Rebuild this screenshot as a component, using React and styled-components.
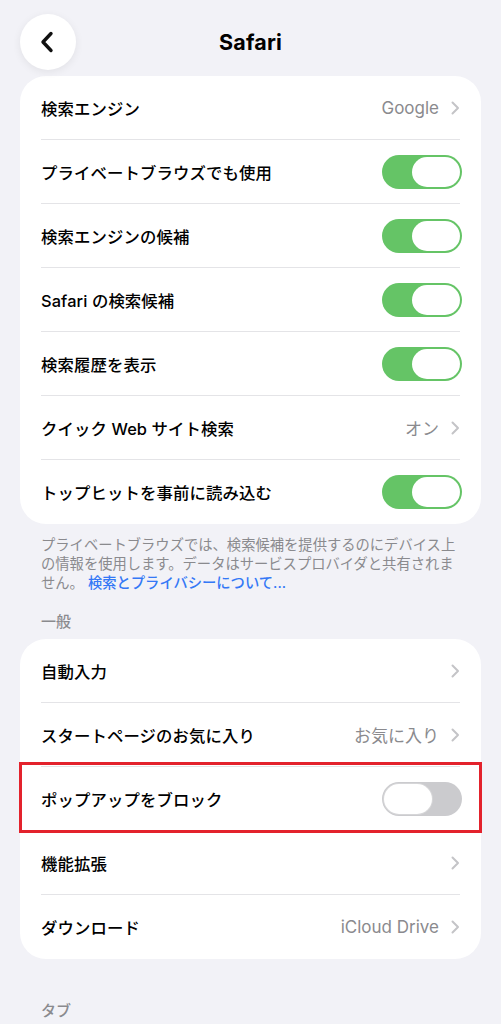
import styled, { createGlobalStyle } from 'styled-components';

const GlobalStyle = createGlobalStyle`
    body {
        margin: 0;
        background: #f2f2f7;
        font-family: Inter, "Noto Sans CJK JP", sans-serif;
        color: #000;
    }
`;

const searchRows = [
    { label: '検索エンジン', value: 'Google' },
    { label: 'プライベートブラウズでも使用', toggle: true },
    { label: '検索エンジンの候補', toggle: true },
    { label: 'Safari の検索候補', toggle: true },
    { label: '検索履歴を表示', toggle: true },
    { label: 'クイック Web サイト検索', value: 'オン' },
    { label: 'トップヒットを事前に読み込む', toggle: true },
];

const generalRows = [
    { label: '自動入力', value: '' },
    { label: 'スタートページのお気に入り', value: 'お気に入り' },
    { label: 'ポップアップをブロック', toggle: false, marked: true },
    { label: '機能拡張', value: '' },
    { label: 'ダウンロード', value: 'iCloud Drive' },
];

const Chevron = () => (
    <svg width="9" height="14" viewBox="0 0 9 14">
        <path d="M1.5 1.5 L7 7 L1.5 12.5" fill="none" stroke="#c4c4c7" strokeWidth="2" strokeLinecap="round" strokeLinejoin="round" />
    </svg>
);

const SettingRow = ({ row }) => (
    <Row>
        <Label>{row.label}</Label>
        {row.toggle !== undefined ? (
            <Switch $on={row.toggle}><Knob $on={row.toggle} /></Switch>
        ) : (
            <Accessory>
                {row.value && <Value>{row.value}</Value>}
                <Chevron />
            </Accessory>
        )}
        {row.marked && <Highlight />}
    </Row>
);

const App = () => {
    return(
        <>
            <GlobalStyle />
            <Page>
                <Header>
                    <BackButton>
                        <svg width="14" height="22" viewBox="0 0 14 22">
                            <path d="M11 2.5 L3 11 L11 19.5" fill="none" stroke="#111" strokeWidth="3.4" strokeLinecap="round" strokeLinejoin="round" />
                        </svg>
                    </BackButton>
                    <Title>Safari</Title>
                    <span />
                </Header>

                <Card>
                    {searchRows.map((row) => <SettingRow key={row.label} row={row} />)}
                </Card>
                <Footer>
                    プライベートブラウズでは、検索候補を提供するのにデバイス上の情報を使用します。データはサービスプロバイダと共有されません。 <a>検索とプライバシーについて...</a>
                </Footer>

                <SectionTitle>一般</SectionTitle>
                <Card>
                    {generalRows.map((row) => <SettingRow key={row.label} row={row} />)}
                </Card>

                <SectionTitle $spaced>タブ</SectionTitle>
            </Page>
        </>
    )
}
export default App;

const Page = styled.div`
    width: 501px;
    height: 1024px;
    overflow: hidden;
`;
const Header = styled.header`
    display: grid;
    grid-template-columns: 56px 1fr 56px;
    align-items: center;
    padding: 14px 20px 6px;
`;
const BackButton = styled.button`
    display: flex;
    justify-content: center;
    align-items: center;
    width: 56px;
    height: 56px;
    padding: 0 3px 0 0;
    border: none;
    border-radius: 50%;
    background: #fff;
    box-shadow: 0 2px 8px rgba(0, 0, 0, 0.07);
`;
const Title = styled.h1`
    margin: 0;
    text-align: center;
    font-size: 21.5px;
    font-weight: 700;
    letter-spacing: 0.2px;
`;
const Card = styled.section`
    margin: 0 20px;
    background: #fff;
    border-radius: 26px;
`;
const Row = styled.div`
    position: relative;
    display: flex;
    justify-content: space-between;
    align-items: center;
    height: 64px;
    margin: 0 21px;
    border-bottom: 1px solid #e4e4e7;
    box-sizing: border-box;

    &:last-child {
        border-bottom: none;
    }
`;
const Label = styled.span`
    font-size: 16.4px;
    font-weight: 500;
    letter-spacing: 0.1px;
`;
const Accessory = styled.span`
    display: flex;
    align-items: center;
    gap: 12px;
`;
const Value = styled.span`
    font-size: 17px;
    color: #8a8a8e;
`;
const Switch = styled.span`
    display: flex;
    align-items: center;
    justify-content: ${(props) => props.$on ? 'flex-end' : 'flex-start'};
    width: 80px;
    height: 34px;
    margin-right: -2px;
    padding: 2px;
    box-sizing: border-box;
    border-radius: 17px;
    background: ${(props) => props.$on ? '#65c466' : '#cbcbce'};
`;
const Knob = styled.span`
    width: 48px;
    height: 30px;
    border-radius: 15px;
    background: #fff;
    box-shadow: ${(props) => props.$on ? 'none' : '0 0 0 1px #d6d6d8'};
`;
const Highlight = styled.span`
    position: absolute;
    top: -5px;
    bottom: -3px;
    left: -22px;
    right: -22px;
    border: 3px solid #e3222c;
    pointer-events: none;
`;
const Footer = styled.p`
    width: 420px;
    margin: 0;
    padding: 11px 0 0 41px;
    font-size: 14.3px;
    line-height: 19px;
    color: #8a8a8e;

    a {
        color: #3478f6;
        font-weight: 500;
    }
`;
const SectionTitle = styled.h2`
    margin: ${(props) => props.$spaced ? '43px' : '21px'} 0 8px;
    padding-left: 41px;
    font-size: 15px;
    line-height: 18px;
    font-weight: 500;
    color: #8a8a8e;
`;
